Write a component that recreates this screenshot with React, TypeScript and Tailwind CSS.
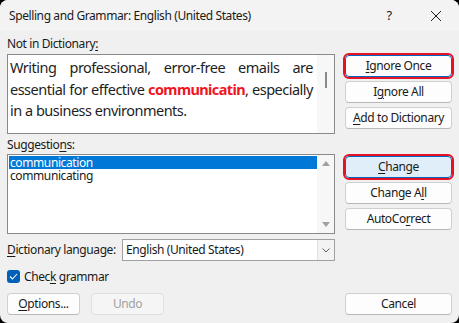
const FONT = "font-['Noto_Sans',sans-serif] tracking-[-0.4px]";

function Btn({
  label,
  ul,
  variant = "normal",
  className = "",
}: {
  label: string;
  ul?: number;
  variant?: "normal" | "focus" | "active" | "disabled";
  className?: string;
}) {
  const chars =
    ul === undefined ? (
      label
    ) : (
      <>
        {label.slice(0, ul)}
        <span className="underline underline-offset-[2px]">{label[ul]}</span>
        {label.slice(ul + 1)}
      </>
    );
  const base =
    "flex items-center justify-center h-[22px] rounded-[4px] text-[12px] leading-none border whitespace-nowrap";
  const look =
    variant === "active"
      ? "bg-[#e0eef9] border-[#0067c0] text-[#1a1a1a] outline-2 outline-[#e81123] outline-offset-0"
      : variant === "focus"
      ? "bg-[#fdfdfd] border-[#0067c0] text-[#1a1a1a] outline-2 outline-[#e81123] outline-offset-0"
      : variant === "disabled"
      ? "bg-[#f5f5f5] border-[#e0e0e0] text-[#a0a0a0]"
      : "bg-[#fdfdfd] border-[#d0d0d0] border-b-[#b8b8b8] text-[#1a1a1a]";
  return <div className={`${base} ${look} ${className}`}>{chars}</div>;
}

function Ul({ children }: { children: React.ReactNode }) {
  return <span className="underline underline-offset-[2px]">{children}</span>;
}

// each full line is stretched edge to edge like the justified original
const JLINE = "whitespace-nowrap text-justify [text-align-last:justify]";

export default function App() {
  return (
    <div className={`w-[459px] h-[323px] bg-black ${FONT}`}>
      <div className="w-full h-full rounded-[8px] overflow-hidden bg-[#f0f0f0] flex flex-col">
        {/* Title bar */}
        <div className="h-[31px] bg-[#f3f3f3] flex items-center pl-[9px] text-[12px] text-[#1a1a1a]">
          <span className="flex-1">Spelling and Grammar: English (United States)</span>
          <span className="w-[20px] text-center text-[13px] mr-[31px]">?</span>
          <svg width="12" height="12" viewBox="0 0 12 12" className="mr-[17px]">
            <path d="M1 1 L11 11 M11 1 L1 11" stroke="#1a1a1a" strokeWidth="1" />
          </svg>
        </div>

        {/* Body */}
        <div className="flex px-[7px] gap-[10px]">
          {/* Left column */}
          <div className="w-[328px] flex flex-col">
            <div className="h-[23px] pt-[5px] text-[12px] leading-[16px] text-[#1a1a1a]">
              Not in Dictionary<Ul>:</Ul>
            </div>
            <div className="h-[80px] bg-white border border-[#8a8a8a] flex">
              <div className="flex-1 min-w-0 pl-[2px] pr-[4px] pt-[2px] text-[14.5px] leading-[21.5px] tracking-[-0.5px] text-[#1e1e1e]">
                <div className={JLINE}>Writing professional, error-free emails are</div>
                <div className={JLINE}>
                  essential for effective{" "}
                  <span className="font-bold text-[#f0141e] tracking-[-0.6px]">communicatin</span>, especially
                </div>
                <div className="whitespace-nowrap">in a business environments.</div>
              </div>
              <div className="w-[17px] bg-[#f7f7f7] flex justify-center pt-[17px]">
                <div className="w-[2px] h-[16px] bg-[#8a8a8a]" />
              </div>
            </div>

            <div className="h-[20px] pt-[3px] text-[12px] leading-[16px] text-[#1a1a1a]">
              Suggestio<Ul>n</Ul>s:
            </div>
            <div className="h-[80px] bg-white border border-[#8a8a8a] flex">
              <div className="flex-1 pl-[1px] pt-[1px] text-[12px] leading-[13px] text-[#1a1a1a]">
                <div className="bg-[#0078d7] text-white pl-[1px] h-[13px]">communication</div>
                <div className="pl-[1px] h-[13px]">communicating</div>
              </div>
              <div className="w-[17px] bg-[#f7f7f7] flex flex-col items-center justify-between py-[6px]">
                <svg width="8" height="5" viewBox="0 0 8 5">
                  <path d="M0 5 L4 0 L8 5 Z" fill="#a0a0a0" />
                </svg>
                <svg width="8" height="5" viewBox="0 0 8 5">
                  <path d="M0 0 L8 0 L4 5 Z" fill="#a0a0a0" />
                </svg>
              </div>
            </div>

            <div className="mt-[5px] h-[22px] flex items-center">
              <span className="w-[115px] whitespace-nowrap text-[12px] text-[#1a1a1a]">
                <Ul>D</Ul>ictionary language:
              </span>
              <div className="flex-1 h-[22px] bg-white border border-[#a0a0a0] flex items-center">
                <span className="flex-1 pl-[3px] text-[12px] text-[#1a1a1a]">English (United States)</span>
                <div className="w-[17px] h-full bg-[#f3f3f3] border-l border-[#e0e0e0] flex items-center justify-center">
                  <svg width="8" height="5" viewBox="0 0 8 5">
                    <path d="M0.5 0.5 L4 4 L7.5 0.5" fill="none" stroke="#606060" strokeWidth="1" />
                  </svg>
                </div>
              </div>
            </div>

            <div className="mt-[9px] h-[13px] flex items-center gap-[4px]">
              <div className="w-[13px] h-[13px] rounded-[3px] bg-[#005fb8] flex items-center justify-center">
                <svg width="9" height="7" viewBox="0 0 9 7">
                  <path d="M1 3.5 L3.5 6 L8 1" fill="none" stroke="white" strokeWidth="1.1" />
                </svg>
              </div>
              <span className="text-[12px] text-[#1a1a1a]">
                Chec<Ul>k</Ul> grammar
              </span>
            </div>
          </div>

          {/* Right column */}
          <div className="w-[107px] flex flex-col pt-[24px]">
            <Btn label="Ignore Once" ul={0} variant="focus" />
            <Btn label="Ignore All" ul={1} className="mt-[4px]" />
            <Btn label="Add to Dictionary" ul={0} className="mt-[4px]" />
            <Btn label="Change" ul={0} variant="active" className="mt-[27px]" />
            <Btn label="Change All" ul={8} className="mt-[4px]" />
            <Btn label="AutoCorrect" ul={6} className="mt-[4px]" />
          </div>
        </div>

        {/* Bottom buttons */}
        <div className="mt-[10px] px-[7px] flex">
          <Btn label="Options..." ul={0} className="w-[73px]" />
          <Btn label="Undo" variant="disabled" className="w-[73px] ml-[11px]" />
          <div className="flex-1" />
          <Btn label="Cancel" className="w-[107px]" />
        </div>
      </div>
    </div>
  );
}
